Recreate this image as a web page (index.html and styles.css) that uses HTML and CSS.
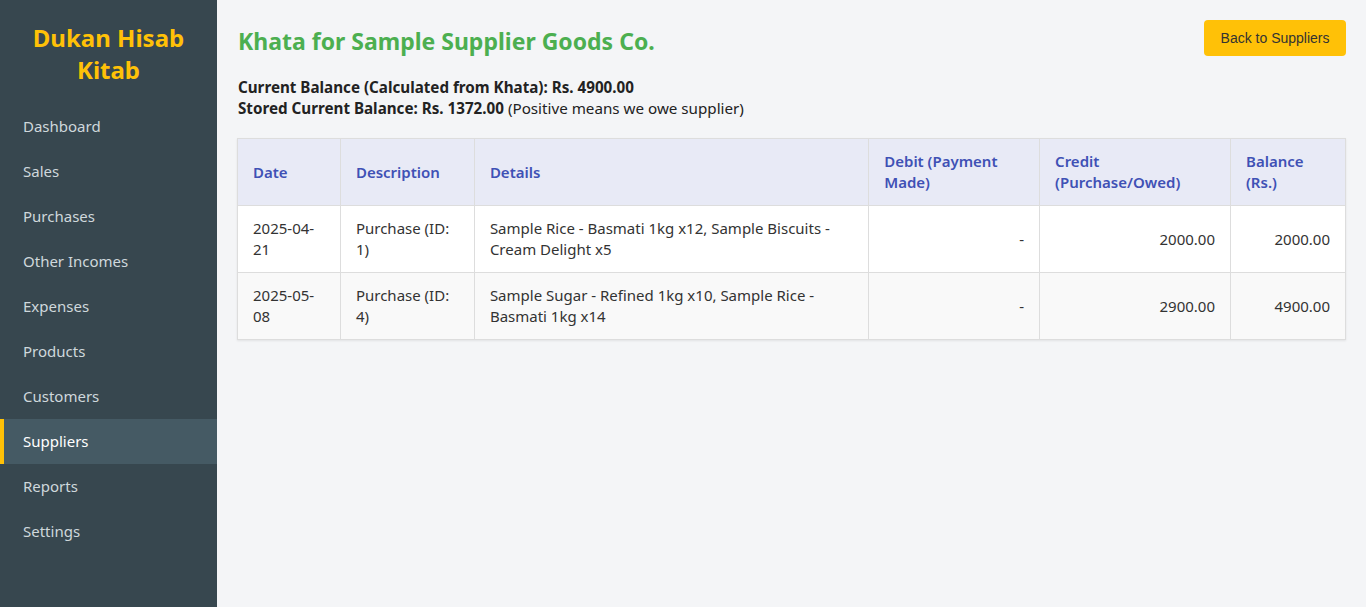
FILE: index.html
```html
<!DOCTYPE html>
<html>
<head>
<meta charset="utf-8">
<link rel="stylesheet" href="styles.css">
</head>
<body>
<div class="app">
  <aside class="sidebar">
    <h1 class="brand">Dukan Hisab Kitab</h1>
    <nav class="nav">
      <a class="nav-item">Dashboard</a>
      <a class="nav-item">Sales</a>
      <a class="nav-item">Purchases</a>
      <a class="nav-item">Other Incomes</a>
      <a class="nav-item">Expenses</a>
      <a class="nav-item">Products</a>
      <a class="nav-item">Customers</a>
      <a class="nav-item active">Suppliers</a>
      <a class="nav-item">Reports</a>
      <a class="nav-item">Settings</a>
    </nav>
  </aside>
  <main class="main">
    <div class="header">
      <h2 class="title">Khata for Sample Supplier Goods Co.</h2>
      <button class="btn">Back to Suppliers</button>
    </div>
    <div class="summary">
      <div><strong>Current Balance (Calculated from Khata): Rs. 4900.00</strong></div>
      <div><strong>Stored Current Balance: Rs. 1372.00</strong> (Positive means we owe supplier)</div>
    </div>
    <table class="khata">
      <colgroup>
        <col class="c-date"><col class="c-desc"><col class="c-details"><col class="c-debit"><col class="c-credit"><col class="c-bal">
      </colgroup>
      <thead>
        <tr>
          <th>Date</th>
          <th>Description</th>
          <th>Details</th>
          <th>Debit (Payment Made)</th>
          <th>Credit (Purchase/Owed)</th>
          <th>Balance (Rs.)</th>
        </tr>
      </thead>
      <tbody>
        <tr>
          <td>2025-04-21</td>
          <td>Purchase (ID: 1)</td>
          <td>Sample Rice - Basmati 1kg x12, Sample Biscuits - Cream Delight x5</td>
          <td class="num">-</td>
          <td class="num">2000.00</td>
          <td class="num">2000.00</td>
        </tr>
        <tr>
          <td>2025-05-08</td>
          <td>Purchase (ID: 4)</td>
          <td>Sample Sugar - Refined 1kg x10, Sample Rice - Basmati 1kg x14</td>
          <td class="num">-</td>
          <td class="num">2900.00</td>
          <td class="num">4900.00</td>
        </tr>
      </tbody>
    </table>
  </main>
</div>
</body>
</html>
```
FILE: styles.css
```css
* { box-sizing: border-box; }
html, body { margin: 0; padding: 0; height: 100%; }
body {
  font-family: "Noto Sans", "Open Sans", sans-serif;
  background: #f4f5f7;
  color: #333;
}
.app { display: flex; min-height: 607px; }
.sidebar {
  width: 217px;
  flex-shrink: 0;
  background: #37474f;
  padding-top: 22px;
}
.brand {
  margin: 0 0 18px;
  padding: 0 20px;
  color: #ffc107;
  font-size: 24px;
  line-height: 32px;
  font-weight: 700;
  text-align: center;
}
.nav { display: flex; flex-direction: column; }
.nav-item {
  display: block;
  height: 45px;
  line-height: 45px;
  color: #cfd8dc;
  font-size: 15px;
  border-left: 4px solid transparent;
  padding-left: 19px;
}
.nav-item.active {
  background: #455a64;
  border-left-color: #ffc107;
  color: #fff;
}
.main {
  flex: 1;
  padding: 20px;
}
.header {
  display: flex;
  justify-content: space-between;
  align-items: flex-start;
}
.title {
  margin: 6px 0 0 1px;
  color: #4caf50;
  font-size: 23px;
  line-height: 30px;
  font-weight: 700;
}
.btn {
  font-family: "Liberation Sans", Arial, sans-serif;
  font-size: 14px;
  color: #333;
  background: #ffc107;
  border: none;
  border-radius: 4px;
  height: 36px;
  padding: 0 16.5px;
}
.summary {
  margin-top: 21px;
  font-size: 15.2px;
  line-height: 21px;
  color: #222;
  padding-left: 1px;
}
.summary strong { font-weight: 700; }
.khata {
  margin-top: 19px;
  width: 100%;
  border-collapse: collapse;
  background: #fff;
  font-size: 15px;
  line-height: 21px;
  box-shadow: 0 1px 2px rgba(0,0,0,0.08);
}
.c-date { width: 103px; }
.c-desc { width: 134px; }
.c-details { width: 395px; }
.c-debit { width: 171px; }
.c-credit { width: 191px; }
.c-bal { width: 115px; }
.khata th, .khata td {
  border: 1px solid #ddd;
  padding: 12px 15px;
  text-align: left;
  vertical-align: middle;
}
.khata th {
  background: #e8eaf6;
  color: #3f51b5;
  font-weight: 600;
}
.khata td { color: #333; }
.khata tbody tr:nth-child(even) td { background: #f9f9f9; }
.khata td.num { text-align: right; }
```
